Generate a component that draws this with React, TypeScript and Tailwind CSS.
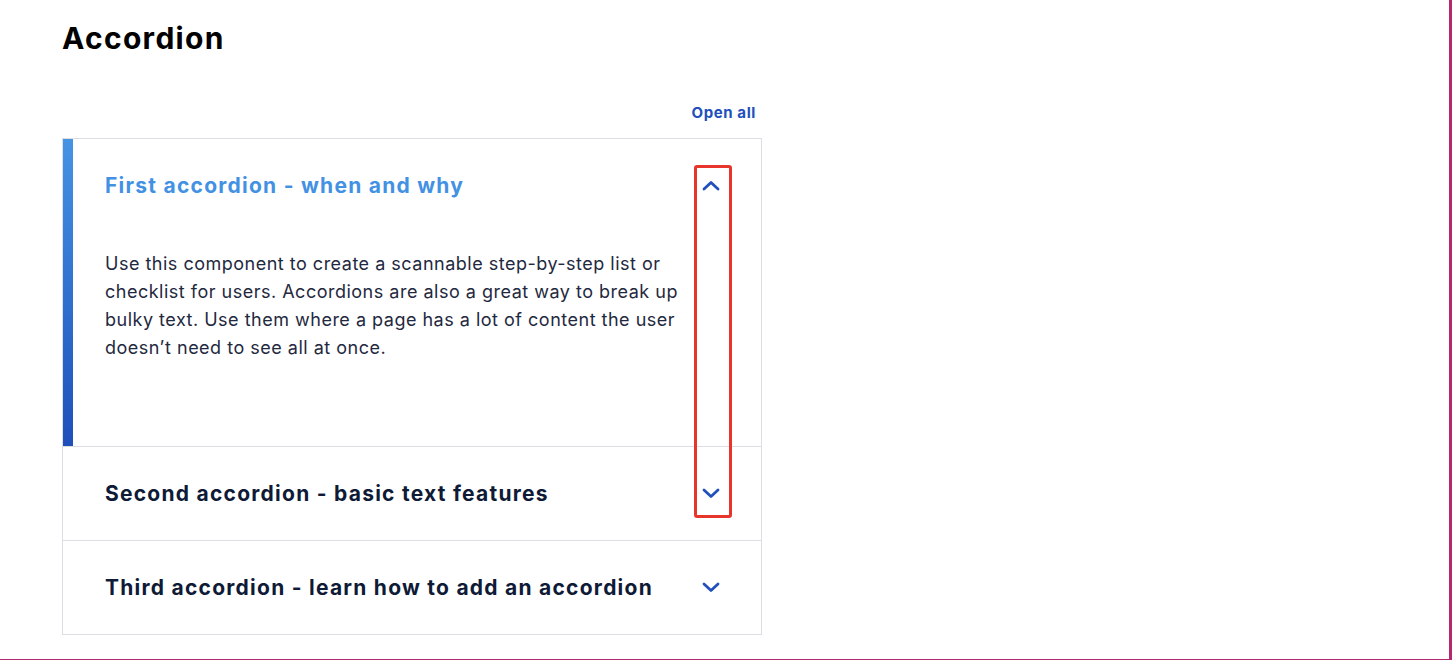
import React, { useState } from 'react';

type Item = { title: string; body?: string };

const items: Item[] = [
  {
    title: 'First accordion - when and why',
    body: 'Use this component to create a scannable step-by-step list or checklist for users. Accordions are also a great way to break up bulky text. Use them where a page has a lot of content the user doesn\u2019t need to see all at once.',
  },
  { title: 'Second accordion - basic text features', body: '' },
  { title: 'Third accordion - learn how to add an accordion', body: '' },
];

function Chevron({ up }: { up?: boolean }) {
  return (
    <svg width="18" height="11" viewBox="0 0 18 11" fill="none" className="shrink-0">
      <path
        d={up ? 'M2 9L9 2.5L16 9' : 'M2 2L9 8.5L16 2'}
        stroke="#2150bd"
        strokeWidth="2.8"
        strokeLinecap="round"
        strokeLinejoin="round"
      />
    </svg>
  );
}

export default function App() {
  const [open, setOpen] = useState<number[]>([0]);

  const toggle = (i: number) =>
    setOpen((o) => (o.includes(i) ? o.filter((x) => x !== i) : [...o, i]));

  return (
    <div
      className="relative h-[660px] w-[1452px] overflow-hidden bg-white border-r-[3px] border-b border-[#b3286f]"
      style={{ fontFamily: 'Inter, "Noto Sans", sans-serif' }}
    >
      <div className="w-[762px] pl-[62px] pt-[20px]">
        {/* Title */}
        <h1 className="text-[30px] font-bold leading-[36px] tracking-[1.3px] text-black">Accordion</h1>

        {/* Open all */}
        <div className="mt-[47px] flex justify-end pr-[6px]">
          <button className="text-[15px] font-bold leading-[20px] tracking-[0.6px] text-[#2150bd]">Open all</button>
        </div>

        {/* Accordion list */}
        <div className="mt-[15px] border-x border-t border-[#dcdee3]">
          {items.map((item, i) => {
            const isOpen = open.includes(i);
            return (
              <div key={item.title} className="flex border-b border-[#dcdee3]">
                {isOpen ? (
                  <div className="w-[10px] shrink-0 bg-gradient-to-b from-[#4693e4] to-[#1f4fba]" />
                ) : (
                  <div className="w-[10px] shrink-0" />
                )}
                <div className="flex-1">
                  <button
                    onClick={() => toggle(i)}
                    className="flex h-[93px] w-full items-center justify-between pl-[32px] pr-[41px] text-left"
                  >
                    <span
                      className={`text-[21px] font-bold leading-[28px] tracking-[1.25px] ${
                        isOpen ? 'text-[#4391e3]' : 'text-[#0e1a36]'
                      }`}
                    >
                      {item.title}
                    </span>
                    <Chevron up={isOpen} />
                  </button>
                  {isOpen && (
                    <div className="pl-[32px] pt-[18px] pb-[84px]">
                      <p className="w-[580px] text-[18px] leading-[28px] tracking-[0.5px] text-[#1f2940]">
                        {item.body}
                      </p>
                    </div>
                  )}
                </div>
              </div>
            );
          })}
        </div>
      </div>

      {/* highlight annotation */}
      <div className="pointer-events-none absolute left-[694px] top-[165px] h-[353px] w-[38px] rounded-[3px] border-[3px] border-[#e8352c]" />
    </div>
  );
}
